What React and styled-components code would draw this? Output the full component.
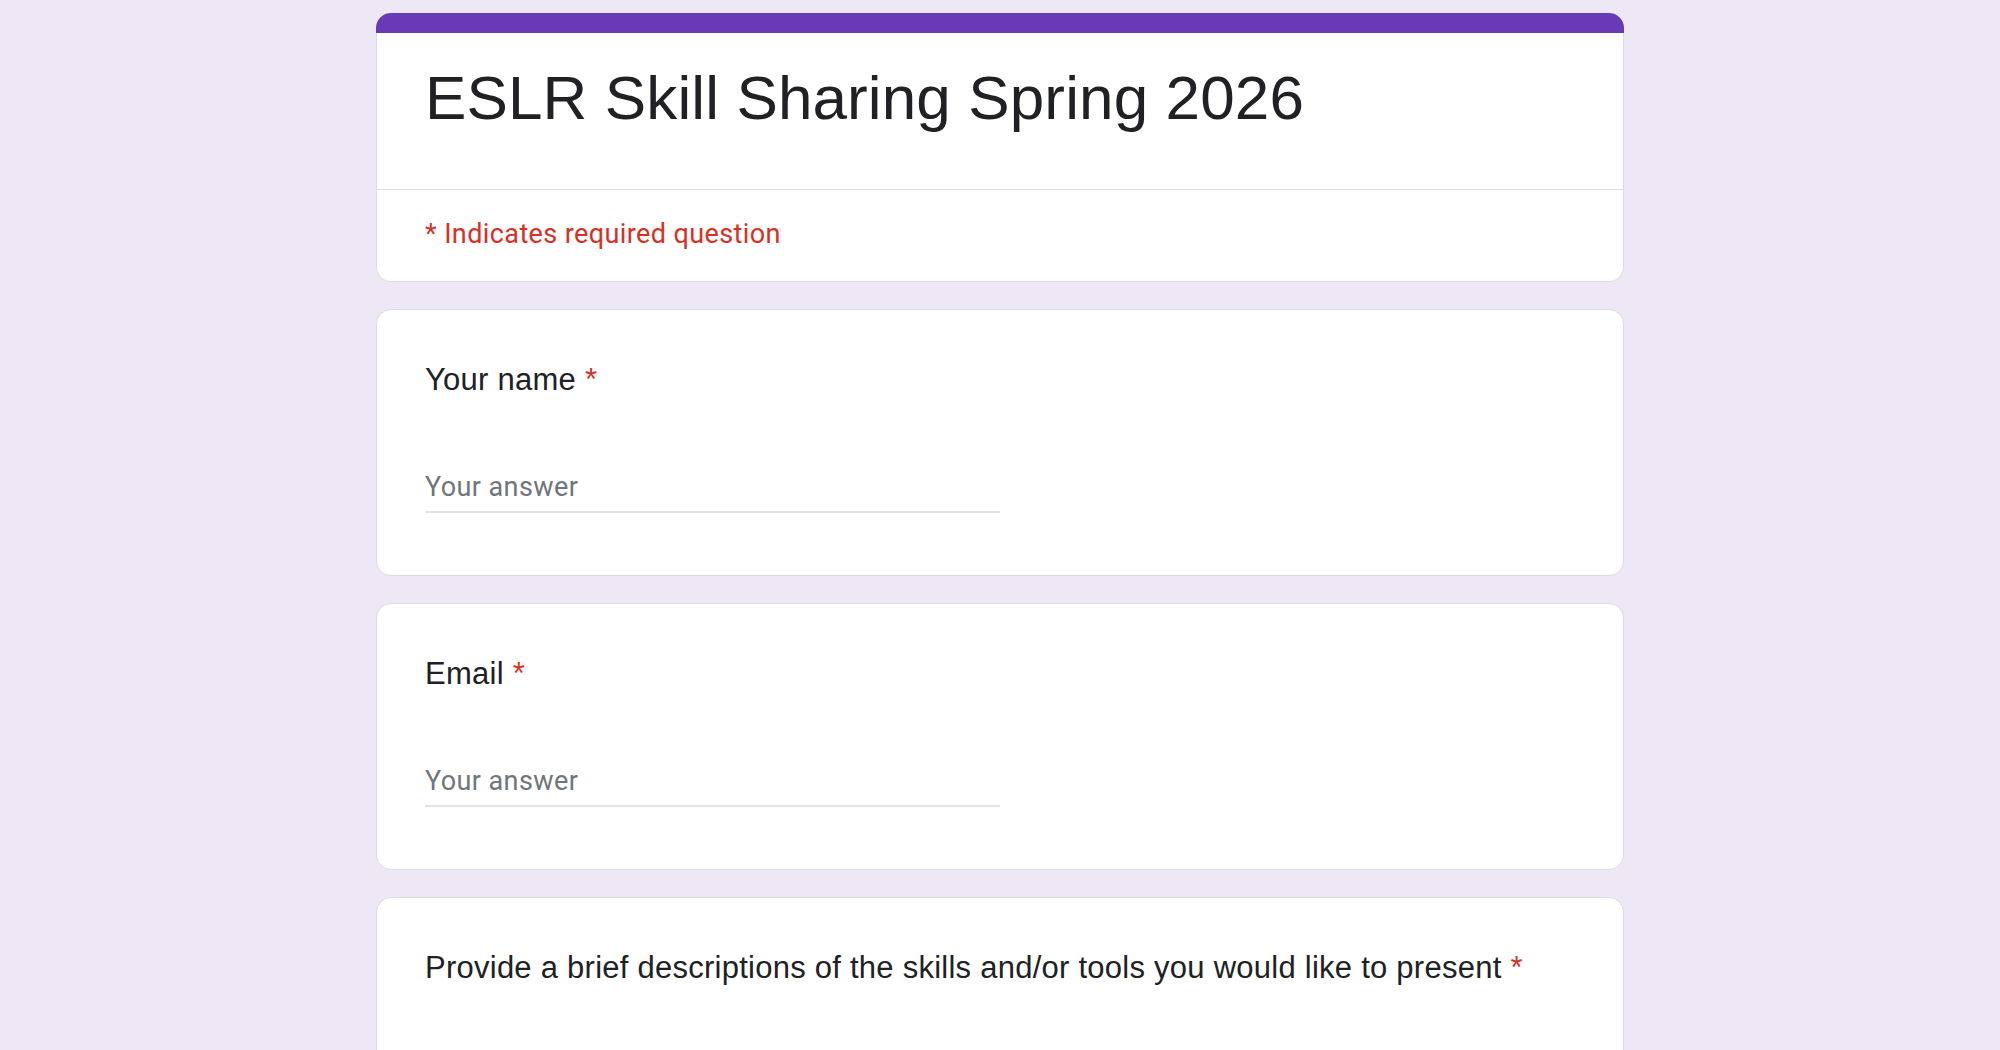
import React from "react";
import styled, { createGlobalStyle } from "styled-components";

const GlobalStyle = createGlobalStyle`
  html, body {
    margin: 0;
    padding: 0;
    overflow: hidden;
    background: #ede7f6;
  }
  * { box-sizing: border-box; }
`;

const Page = styled.div`
  width: 1248px;
  margin: 0 auto;
  padding-top: 13px;
  display: flex;
  flex-direction: column;
  gap: 27px;
`;

const Card = styled.section`
  background: #ffffff;
  border: 1px solid #dadce0;
  border-radius: 15px;
`;

const HeaderCard = styled(Card)`
  border-top: 0;
  display: flex;
  flex-direction: column;
`;

const TopBar = styled.div`
  height: 20px;
  margin: 0 -1px;
  background: #673ab7;
  border-radius: 15px 15px 0 0;
`;

const TitleBlock = styled.div`
  padding: 27px 48px 53px;
  border-bottom: 1px solid #dadce0;
`;

const Title = styled.h1`
  margin: 0;
  font-family: "Liberation Sans", Arial, sans-serif;
  font-weight: 400;
  font-size: 62px;
  line-height: 76px;
  letter-spacing: 0.12px;
  color: #202124;
`;

const RequiredNote = styled.div`
  padding: 26px 48px 29px;
  font-family: Roboto, "Liberation Sans", sans-serif;
  font-size: 27px;
  line-height: 36px;
  letter-spacing: 0.4px;
  color: #d93025;
`;

const QuestionCard = styled(Card)`
  padding: 47px 48px 62px;
  display: flex;
  flex-direction: column;
`;

const QuestionTitle = styled.div`
  font-family: "Liberation Sans", Arial, sans-serif;
  font-size: 31px;
  line-height: 46px;
  letter-spacing: 0.25px;
  color: #202124;
`;

const Star = styled.span`
  color: #d93025;
`;

const AnswerInput = styled.input`
  margin-top: 59px;
  width: 50%;
  height: 51px;
  padding: 0;
  border: 0;
  border-bottom: 2px solid #e3e3e6;
  outline: none;
  background: transparent;
  font-family: Roboto, "Liberation Sans", sans-serif;
  font-size: 27px;
  letter-spacing: 0.4px;
  color: #202124;
  &::placeholder {
    color: #70757a;
    opacity: 1;
  }
`;

const questions = [
  "Your name",
  "Email",
  "Provide a brief descriptions of the skills and/or tools you would like to present",
];

export default function App() {
  return (
    <>
      <GlobalStyle />
      <Page>
        <HeaderCard>
          <TopBar />
          <TitleBlock>
            <Title>ESLR Skill Sharing Spring 2026</Title>
          </TitleBlock>
          <RequiredNote>* Indicates required question</RequiredNote>
        </HeaderCard>
        {questions.map((q) => (
          <QuestionCard key={q}>
            <QuestionTitle>
              {q} <Star>*</Star>
            </QuestionTitle>
            <AnswerInput type="text" placeholder="Your answer" />
          </QuestionCard>
        ))}
      </Page>
    </>
  );
}
